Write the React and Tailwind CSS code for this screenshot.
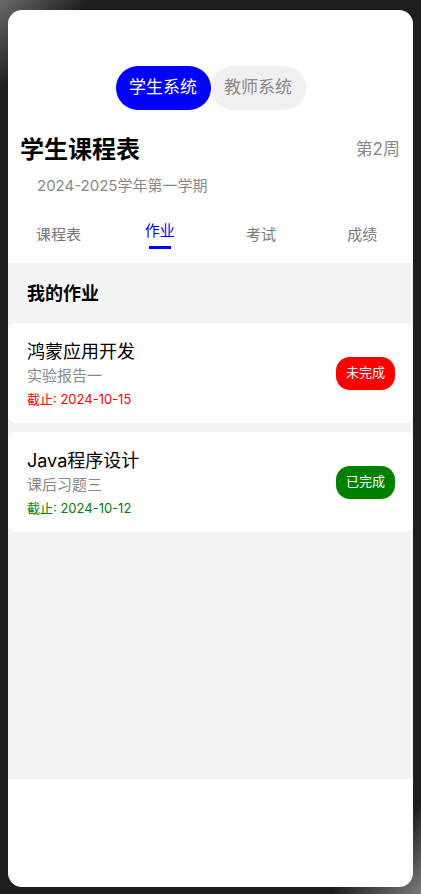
import React from "react";

const tabs = ["课程表", "作业", "考试", "成绩"];
const items = [
  { course: "鸿蒙应用开发", task: "实验报告一", due: "截止: 2024-10-15", done: false },
  { course: "Java程序设计", task: "课后习题三", due: "截止: 2024-10-12", done: true },
];

export default function App() {
  return (
    <div className="w-[421px] h-[894px] pl-[8px] pr-[8px] pt-[10px] pb-[7px] bg-[linear-gradient(135deg,#6a6a6a_0%,#1e1e1e_7%,#1e1e1e_93%,#7a7a7a_100%)] font-['Inter','Noto_Sans_CJK_SC',sans-serif]">
      <div className="w-[405px] h-[877px] bg-white rounded-[14px] overflow-hidden flex flex-col">
        <div className="pt-[56px] flex justify-center">
          <div className="w-[95px] h-[44px] rounded-full bg-[#0000ff] text-white text-[17px] flex items-center justify-center">学生系统</div>
          <div className="w-[95px] h-[44px] rounded-full bg-[#f0f0f0] text-[#888888] text-[17px] flex items-center justify-center">教师系统</div>
        </div>
        <div className="mt-[24px] h-[28px] pl-[12px] pr-[13px] flex items-center justify-between">
          <div className="pt-[4px] text-[24px] font-bold text-black leading-[28px]">学生课程表</div>
          <div className="pt-[3px] text-[17px] text-[#888888]">第2周</div>
        </div>
        <div className="mt-[12px] h-[24px] pl-[29px] flex items-center text-[15px] text-[#888888]">2024-2025学年第一学期</div>
        <div className="h-[65px] pt-[8px] grid grid-cols-4">
          {tabs.map((t, i) => (
            <div key={t} className="flex flex-col items-center justify-center">
              <div className={"text-[15px] leading-[20px] " + (i === 1 ? "text-[#0000ff]" : "text-[#777777]")}>{t}</div>
              {i === 1 && <div className="mt-[5px] w-[22px] h-[3px] bg-[#0000ff]" />}
            </div>
          ))}
        </div>
        <div className="h-[516px] bg-[#f4f4f4] flex flex-col">
          <div className="h-[60px] pl-[19px] flex items-center text-[18px] font-bold text-black">我的作业</div>
          <div className="flex flex-col gap-[9px]">
            {items.map((it) => (
              <div key={it.course} className="h-[100px] bg-white rounded-[8px] pl-[19px] pr-[18px] flex items-center justify-between">
                <div className="flex flex-col pt-[4px]">
                  <div className="text-[18px] leading-[24px] text-black">{it.course}</div>
                  <div className="text-[15px] leading-[24px] text-[#888888]">{it.task}</div>
                  <div className={"text-[13px] leading-[22px] " + (it.done ? "text-[#008000]" : "text-[#ff0000]")}>{it.due}</div>
                </div>
                <div className={"w-[59px] h-[33px] rounded-[14px] text-white text-[13px] flex items-center justify-center " + (it.done ? "bg-[#008000]" : "bg-[#ff0000]")}>
                  {it.done ? "已完成" : "未完成"}
                </div>
              </div>
            ))}
          </div>
        </div>
      </div>
    </div>
  );
}
